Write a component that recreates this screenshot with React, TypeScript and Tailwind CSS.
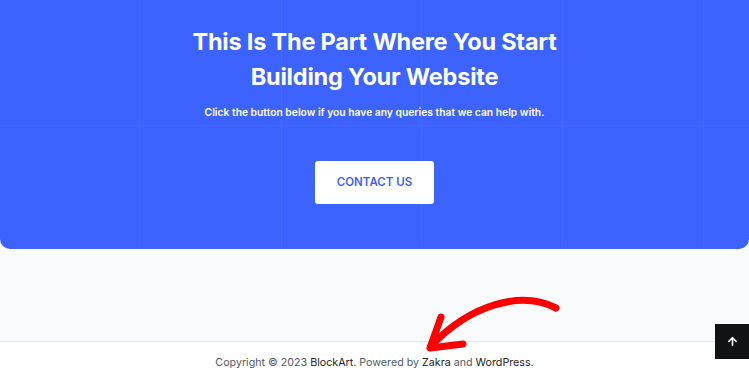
import { ArrowUp } from "lucide-react";

const gridX = [139, 281, 421, 562, 703];

const App = () => {
  return (
    <div className="relative h-[380px] w-[749px] overflow-hidden bg-white font-['Inter',sans-serif]">
      {/* CTA block */}
      <section className="relative h-[249px] overflow-hidden rounded-b-[10px] bg-[#3d63ff]">
        {gridX.map((x) => (
          <div
            key={x}
            className="absolute top-0 h-full w-px bg-[#4468ff]"
            style={{ left: x }}
          />
        ))}
        <div className="absolute left-0 top-[125px] h-px w-full bg-[#4468ff]" />

        <div className="relative flex flex-col items-center pt-[24px] text-center text-white">
          <h2 className="text-[23.5px] font-bold leading-[35px] tracking-[-0.2px]">
            This Is The Part Where You Start
            <br />
            Building Your Website
          </h2>
          <p className="mt-[10px] text-[10.3px] font-semibold leading-[16px]">
            Click the button below if you have any queries that we can help with.
          </p>
          <button className="mt-[41px] flex h-[43px] w-[119px] items-center justify-center rounded-[3px] bg-white text-[11.5px] font-semibold text-[#3d5ffe]">
            CONTACT US
          </button>
        </div>
      </section>

      {/* empty area */}
      <div className="h-[92px] bg-[#f9fafc]" />

      {/* footer */}
      <footer className="flex h-[39px] items-center justify-center border-t border-[#e4e7ec] bg-white pt-[4px] text-[10.7px] text-[#51585f]">
        <span>
          Copyright © 2023 <span className="text-[#222]">BlockArt</span>. Powered by{" "}
          <span className="text-[#222]">Zakra</span> and{" "}
          <span className="text-[#222]">WordPress</span>.
        </span>
      </footer>

      {/* annotation arrow */}
      <svg
        className="pointer-events-none absolute left-0 top-0"
        width="749"
        height="380"
        viewBox="0 0 749 380"
      >
        <g
          fill="none"
          stroke="#ff0000"
          strokeWidth="7"
          strokeLinecap="round"
          strokeLinejoin="round"
        >
          <path d="M556 308 C 520 290, 470 305, 431 346" />
          <path d="M441 317 L 430 348 L 463 344" />
        </g>
      </svg>

      {/* scroll to top */}
      <button className="absolute left-[715px] top-[324px] flex h-[35px] w-[34px] items-center justify-center bg-[#111214] text-white">
        <ArrowUp size={13} strokeWidth={3} />
      </button>
    </div>
  );
};

export default App;
